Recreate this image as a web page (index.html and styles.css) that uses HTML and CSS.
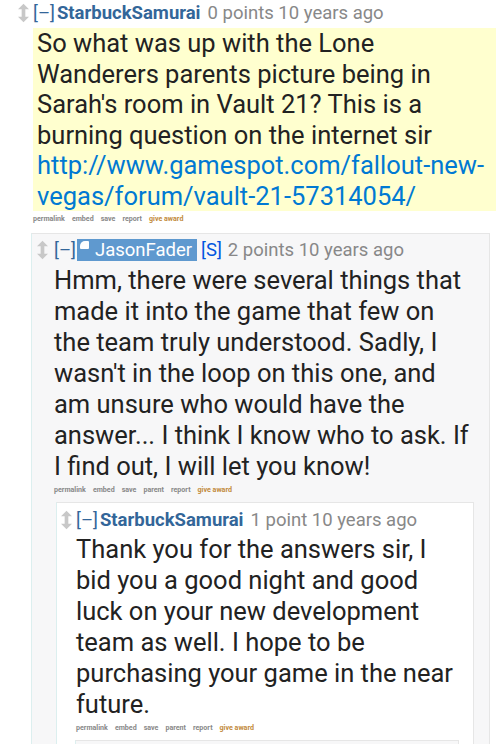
FILE: index.html
```html
<!DOCTYPE html>
<html>
<head>
<meta charset="utf-8">
<link rel="stylesheet" href="styles.css">
</head>
<body>
<div class="thread">
  <div class="comment top">
    <div class="midcol"><svg class="arrows" viewBox="0 0 12 20" width="11" height="20"><path d="M6 0 L12 6 H8 V10 H4 V6 H0 Z" fill="#c8c8c8"/><path d="M4 10 H8 V14 H12 L6 20 L0 14 H4 Z" fill="#c8c8c8"/></svg></div>
    <div class="entry">
      <p class="tagline"><span class="expand">[–]</span><span class="author">StarbuckSamurai</span><span class="meta">0 points 10 years ago</span></p>
      <div class="body highlight">So what was up with the Lone Wanderers parents picture being in Sarah's room in Vault 21? This is a burning question on the internet sir <a href="#">http://www.gamespot.com/fallout-new-vegas/forum/vault-21-57314054/</a></div>
      <ul class="buttons"><li>permalink</li><li>embed</li><li>save</li><li>report</li><li class="award">give award</li></ul>
    </div>
  </div>
  <div class="children c1">
    <div class="comment box grey c2">
      <div class="midcol"><svg class="arrows" viewBox="0 0 12 20" width="11" height="20"><path d="M6 0 L12 6 H8 V10 H4 V6 H0 Z" fill="#c8c8c8"/><path d="M4 10 H8 V14 H12 L6 20 L0 14 H4 Z" fill="#c8c8c8"/></svg></div>
      <div class="entry">
        <p class="tagline"><span class="expand">[–]</span><span class="author admin"><span class="flag"></span>JasonFader</span><span class="sub">[S]</span><span class="meta">2 points 10 years ago</span></p>
        <div class="body">Hmm, there were several things that made it into the game that few on the team truly understood. Sadly, I wasn't in the loop on this one, and am unsure who would have the answer... I think I know who to ask. If I find out, I will let you know!</div>
        <ul class="buttons"><li>permalink</li><li>embed</li><li>save</li><li>parent</li><li>report</li><li class="award">give award</li></ul>
        <div class="children c2kids">
          <div class="comment box white c3">
            <div class="midcol"><svg class="arrows" viewBox="0 0 12 20" width="11" height="20"><path d="M6 0 L12 6 H8 V10 H4 V6 H0 Z" fill="#c8c8c8"/><path d="M4 10 H8 V14 H12 L6 20 L0 14 H4 Z" fill="#c8c8c8"/></svg></div>
            <div class="entry">
              <p class="tagline"><span class="expand">[–]</span><span class="author">StarbuckSamurai</span><span class="meta">1 point 10 years ago</span></p>
              <div class="body">Thank you for the answers sir, I bid you a good night and good luck on your new development team as well. I hope to be purchasing your game in the near future.</div>
              <ul class="buttons"><li>permalink</li><li>embed</li><li>save</li><li>parent</li><li>report</li><li class="award">give award</li></ul>
              <div class="children c3kids">
                <div class="comment box grey stub"></div>
              </div>
            </div>
          </div>
        </div>
      </div>
    </div>
  </div>
</div>
</body>
</html>
```

FILE: styles.css
```css
html, body {
  margin: 0;
  padding: 0;
  background: #fff;
  font-family: Roboto, "Noto Sans", sans-serif;
  color: #222;
}
.thread {
  padding-top: 1px;
}
.comment {
  display: flex;
  align-items: flex-start;
}
.top {
  padding-left: 18px;
  padding-right: 6px;
}
.midcol {
  width: 15px;
  flex: none;
  padding-top: 2px;
}
.arrows {
  display: block;
}
.entry {
  flex: 1;
  min-width: 0;
}
.tagline {
  margin: 0;
  font-size: 18.5px;
  line-height: 24px;
  color: #888;
  white-space: nowrap;
}
.expand {
  color: #369;
}
.author {
  color: #369;
  font-weight: bold;
  margin-left: 2px;
  margin-right: 7px;
}
.author.admin {
  font-weight: normal;
  color: #fff;
  background: #5f99cf;
  padding: 0 5px 0 3px;
  margin-left: 1px;
  margin-right: 4px;
}
.flag {
  display: inline-block;
  width: 9px;
  height: 8px;
  background: #fff;
  border-radius: 5px 1px 1px 1px;
  vertical-align: top;
  margin-top: 3px;
  margin-right: 6px;
}
.sub {
  color: #0055df;
  margin-right: 6px;
}
.body {
  font-size: 25.5px;
  line-height: 31px;
  margin-top: 2.5px;
}
.body.highlight {
  background: #ffffcf;
  padding: 0 4px;
  margin-top: 3px;
  line-height: 30.5px;
}
.body a {
  color: #0079d3;
  text-decoration: none;
  overflow-wrap: break-word;
}
.buttons {
  list-style: none;
  margin: 0;
  padding: 0;
  display: flex;
  gap: 7px;
  font-size: 7.1px;
  font-weight: bold;
  color: #888;
  line-height: 16px;
}
.buttons .award {
  color: #c28a3a;
}
.children.c1 {
  padding-left: 31px;
  padding-right: 12px;
  margin-top: 6px;
}
.box {
  border: 1px solid #e6e6e6;
  border-left-color: #dcefef;
  padding: 4px 0 0 5px;
}
.c2 > .midcol {
  width: 17px;
}
.c2 > .entry {
  padding-right: 18px;
}
.grey {
  background: #f7f7f8;
}
.white {
  background: #fff;
}
.c2kids {
  margin-top: 4px;
  margin-left: 2px;
}
.c3 {
  padding-top: 5px;
  padding-left: 4px;
  margin-right: -3px;
}
.c3 > .entry {
  padding-right: 14px;
}
.c3kids {
  margin-top: 4px;
  margin-left: -1px;
  margin-right: 0;
}
.stub {
  height: 20px;
}
```
